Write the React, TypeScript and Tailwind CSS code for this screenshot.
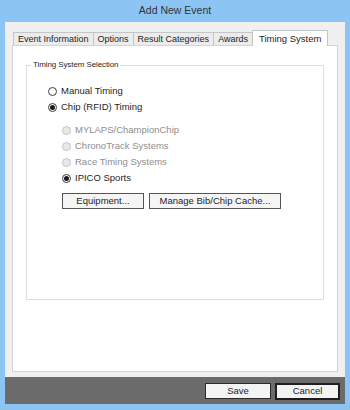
import React from "react";

const tabs = ["Event Information", "Options", "Result Categories", "Awards"];

function Radio({
  label,
  checked = false,
  disabled = false,
}: {
  label: string;
  checked?: boolean;
  disabled?: boolean;
}) {
  return (
    <div className="flex items-center h-[16px]">
      <span
        className={`w-[9px] h-[9px] rounded-full border flex items-center justify-center ${
          disabled ? "border-[#c4c4c4] bg-[#e8e8e8]" : "border-[#3c3c3c] bg-white"
        }`}
      >
        {checked && <span className="w-[5px] h-[5px] rounded-full bg-[#1a1a1a]" />}
      </span>
      <span
        className={`ml-[4px] text-[9.5px] leading-none ${
          disabled ? "text-[#8e8e8e]" : "text-[#1e1e1e]"
        }`}
      >
        {label}
      </span>
    </div>
  );
}

export default function App() {
  return (
    <div className="w-[350px] h-[410px] bg-[#8cc5f4] flex flex-col font-['Liberation_Sans',Arial,sans-serif]">
      <div className="h-[22px] flex items-center justify-center text-[10.5px] text-[#333]">
        Add New Event
      </div>

      <div className="mx-[5px] flex-1 bg-[#f0f0f0] flex flex-col px-[7px] pt-[8px]">
        {/* tab strip */}
        <div className="flex items-end h-[15px] pl-[1px]">
          {tabs.map((t) => (
            <div
              key={t}
              className="h-[13px] px-[4px] flex items-center border border-b-0 border-[#c6c6c6] -ml-[1px] first:ml-0 bg-[#ececec] text-[9px] text-[#1e1e1e] leading-none"
            >
              {t}
            </div>
          ))}
          <div className="h-[16px] px-[6px] flex items-center border border-b-0 border-[#c6c6c6] -ml-[1px] bg-white text-[9.5px] text-[#1e1e1e] leading-none relative z-10 -mb-[1px]">
            Timing System
          </div>
        </div>

        {/* tab panel */}
        <div className="flex-1 bg-white border border-[#d4d4d4] px-[13px] pt-[19px]">
          <div className="relative border border-[#dedede] h-[235px] pl-[21px] pt-[17px]">
            <span className="absolute left-[4px] -top-[5px] bg-white px-[2px] text-[8px] leading-none text-[#2a2a2a] tracking-[-0.1px]">
              Timing System Selection
            </span>
            <Radio label="Manual Timing" />
            <Radio label="Chip (RFID) Timing" checked />
            <div className="pl-[14px] mt-[7px]">
              <Radio label="MYLAPS/ChampionChip" disabled />
              <Radio label="ChronoTrack Systems" disabled />
              <Radio label="Race Timing Systems" disabled />
              <Radio label="IPICO Sports" checked />
              <div className="flex gap-[5px] mt-[7px]">
                <button className="w-[82px] h-[16px] border border-[#555] bg-[#f5f5f5] text-[9.5px] text-[#1e1e1e] leading-none">
                  Equipment...
                </button>
                <button className="w-[132px] h-[16px] border border-[#555] bg-[#f5f5f5] text-[9.5px] text-[#1e1e1e] leading-none">
                  Manage Bib/Chip Cache...
                </button>
              </div>
            </div>
          </div>
        </div>
        <div className="h-[5px]" />
      </div>

      {/* bottom bar */}
      <div className="mx-[5px] h-[27px] bg-[#6b6b6b] flex items-center justify-end gap-[4px] pr-[5px] pt-[1px]">
        <button className="w-[66px] h-[16px] border border-[#2a2a2a] bg-[#f3f3f3] text-[9.5px] text-[#1e1e1e] leading-none">
          Save
        </button>
        <button className="w-[65px] h-[17px] border-2 border-[#1e1e1e] bg-[#f3f3f3] text-[9.5px] text-[#1e1e1e] leading-none">
          Cancel
        </button>
      </div>
      <div className="h-[6px]" />
    </div>
  );
}
